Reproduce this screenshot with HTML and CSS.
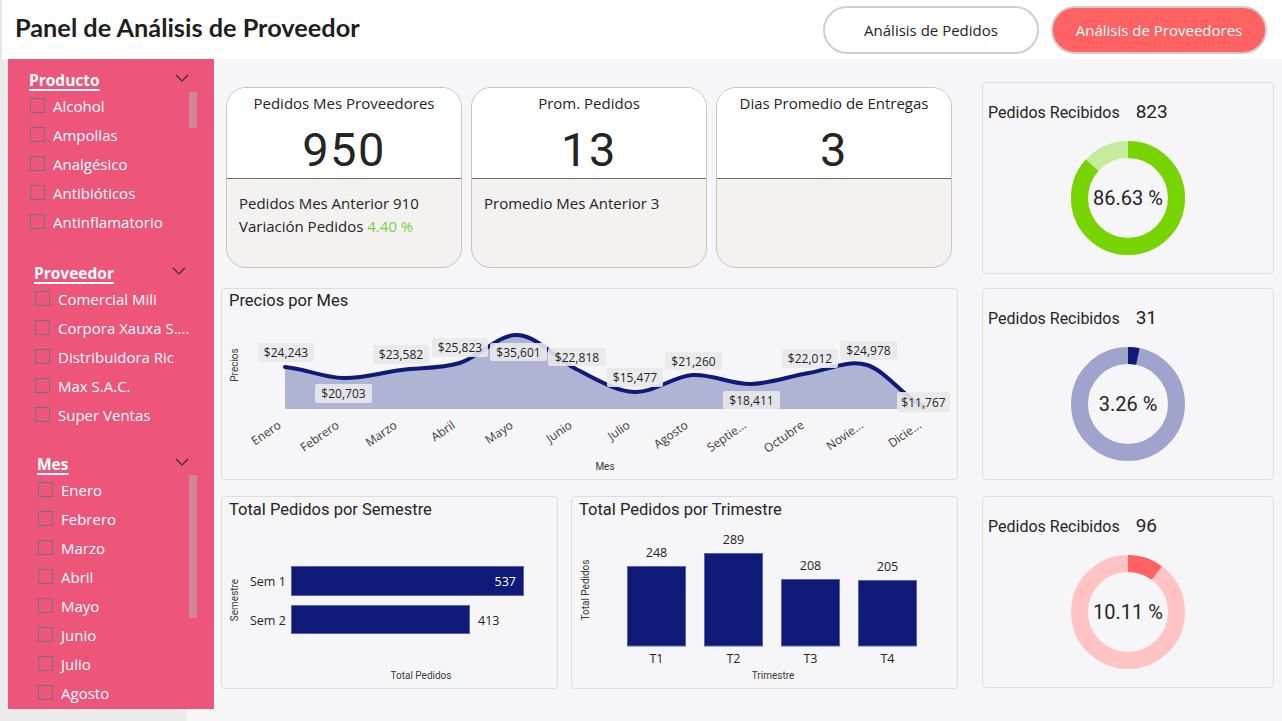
FILE: index.html
```html
<!DOCTYPE html>
<html lang="es">
<head>
<meta charset="utf-8">
<title>Panel de Análisis de Proveedor</title>
<link rel="stylesheet" href="styles.css">
</head>
<body>
<header class="topbar">
  <h1 class="page-title">Panel de Análisis de Proveedor</h1>
  <nav class="nav">
    <button class="nav-btn">Análisis de Pedidos</button>
    <button class="nav-btn active">Análisis de Proveedores</button>
  </nav>
</header>
<main class="main">
  <div class="side-wrap">
    <aside class="sidebar">
      <section class="slicer s-prod">
        <div class="slicer-head"><span class="slicer-title">Producto</span><svg class="chev" width="14" height="8" viewBox="0 0 14 8"><polyline points="1,1 7,7 13,1"/></svg></div>
        <ul class="slicer-list">
          <li><span class="cb"></span>Alcohol</li>
          <li><span class="cb"></span>Ampollas</li>
          <li><span class="cb"></span>Analgésico</li>
          <li><span class="cb"></span>Antibióticos</li>
          <li><span class="cb"></span>Antinflamatorio</li>
        </ul>
        <div class="scroll scroll-prod"></div>
      </section>
      <section class="slicer s-prov">
        <div class="slicer-head"><span class="slicer-title">Proveedor</span><svg class="chev" width="14" height="8" viewBox="0 0 14 8"><polyline points="1,1 7,7 13,1"/></svg></div>
        <ul class="slicer-list">
          <li><span class="cb"></span>Comercial Mili</li>
          <li><span class="cb"></span>Corpora Xauxa S....</li>
          <li><span class="cb"></span>Distribuidora Ric</li>
          <li><span class="cb"></span>Max S.A.C.</li>
          <li><span class="cb"></span>Super Ventas</li>
        </ul>
      </section>
      <section class="slicer s-mes">
        <div class="slicer-head"><span class="slicer-title">Mes</span><svg class="chev" width="14" height="8" viewBox="0 0 14 8"><polyline points="1,1 7,7 13,1"/></svg></div>
        <ul class="slicer-list">
          <li><span class="cb"></span>Enero</li>
          <li><span class="cb"></span>Febrero</li>
          <li><span class="cb"></span>Marzo</li>
          <li><span class="cb"></span>Abril</li>
          <li><span class="cb"></span>Mayo</li>
          <li><span class="cb"></span>Junio</li>
          <li><span class="cb"></span>Julio</li>
          <li><span class="cb"></span>Agosto</li>
        </ul>
        <div class="scroll scroll-mes"></div>
      </section>
    </aside>
  </div>

  <div class="content">
    <div class="left">
      <div class="kpi-row">
        <div class="kpi">
          <div class="kpi-top">
            <div class="kpi-title">Pedidos Mes Proveedores</div>
            <div class="kpi-num">950</div>
          </div>
          <div class="kpi-bottom">
            <div>Pedidos Mes Anterior 910</div>
            <div>Variación Pedidos <span class="pos">4.40 %</span></div>
          </div>
        </div>
        <div class="kpi">
          <div class="kpi-top">
            <div class="kpi-title">Prom. Pedidos</div>
            <div class="kpi-num">13</div>
          </div>
          <div class="kpi-bottom">
            <div>Promedio Mes Anterior 3</div>
          </div>
        </div>
        <div class="kpi">
          <div class="kpi-top">
            <div class="kpi-title">Dias Promedio de Entregas</div>
            <div class="kpi-num">3</div>
          </div>
          <div class="kpi-bottom"></div>
        </div>
      </div>

      <div class="card line-card">
        <div class="card-title">Precios por Mes</div>
        <svg class="chart" width="735" height="167" viewBox="222 312 735 167">
          <text class="axis-title" transform="translate(238,365) rotate(-90)" text-anchor="middle">Precios</text>
          <path class="area" d="M285,409 L285,367 C304.4,368.8 323.8,377.5 343.2,378 C362.6,378.5 382,372.5 401.4,370 C420.8,367.5 440.2,368.8 459.6,363 C479,357.2 498.4,334 517.8,335 C537.2,336 556.6,359.5 576,369 C595.4,378.5 614.8,391 634.2,392 C653.6,393 673,376.3 692.4,375 C711.8,373.7 731.2,384.3 750.6,384 C770,383.7 789.4,376.2 808.8,373 C828.2,369.8 847.6,359.3 867,365 C886.4,370.7 905.8,400 925.2,407 L925.2,409 Z"/>
          <path class="line" d="M285,367 C304.4,368.8 323.8,377.5 343.2,378 C362.6,378.5 382,372.5 401.4,370 C420.8,367.5 440.2,368.8 459.6,363 C479,357.2 498.4,334 517.8,335 C537.2,336 556.6,359.5 576,369 C595.4,378.5 614.8,391 634.2,392 C653.6,393 673,376.3 692.4,375 C711.8,373.7 731.2,384.3 750.6,384 C770,383.7 789.4,376.2 808.8,373 C828.2,369.8 847.6,359.3 867,365 C886.4,370.7 905.8,400 925.2,407"/>
          <g class="dlabels">
            <rect x="258" y="343" width="56" height="19" rx="2"/><text x="286" y="357">$24,243</text>
            <rect x="315" y="384" width="57" height="19" rx="2"/><text x="343.5" y="398">$20,703</text>
            <rect x="373" y="345" width="56" height="19" rx="2"/><text x="401" y="359">$23,582</text>
            <rect x="432" y="338" width="56" height="19" rx="2"/><text x="460" y="352">$25,823</text>
            <rect x="490" y="343" width="57" height="18" rx="2"/><text x="518.5" y="356.5">$35,601</text>
            <rect x="548" y="348" width="58" height="18" rx="2"/><text x="577" y="361.5">$22,818</text>
            <rect x="607" y="368" width="56" height="19" rx="2"/><text x="635" y="382">$15,477</text>
            <rect x="665" y="352" width="57" height="18" rx="2"/><text x="693.5" y="365.5">$21,260</text>
            <rect x="723" y="391" width="57" height="18" rx="2"/><text x="751.5" y="404.5">$18,411</text>
            <rect x="782" y="349" width="56" height="19" rx="2"/><text x="810" y="363">$22,012</text>
            <rect x="840" y="341" width="57" height="19" rx="2"/><text x="868.5" y="355">$24,978</text>
            <rect x="897" y="392" width="53" height="20" rx="2"/><text x="923.5" y="406.5">$11,767</text>
          </g>
          <g class="xlabels" text-anchor="end">
            <text transform="translate(282,427) rotate(-35)">Enero</text>
            <text transform="translate(340,427) rotate(-35)">Febrero</text>
            <text transform="translate(398,427) rotate(-35)">Marzo</text>
            <text transform="translate(456,427) rotate(-35)">Abril</text>
            <text transform="translate(514,427) rotate(-35)">Mayo</text>
            <text transform="translate(573,427) rotate(-35)">Junio</text>
            <text transform="translate(631,427) rotate(-35)">Julio</text>
            <text transform="translate(689,427) rotate(-35)">Agosto</text>
            <text transform="translate(747,427) rotate(-35)">Septie...</text>
            <text transform="translate(805,427) rotate(-35)">Octubre</text>
            <text transform="translate(864,427) rotate(-35)">Novie...</text>
            <text transform="translate(922,427) rotate(-35)">Dicie...</text>
          </g>
          <text class="axis-title" x="605" y="469.5" text-anchor="middle">Mes</text>
        </svg>
      </div>

      <div class="bottom-row">
        <div class="card sem-card">
          <div class="card-title">Total Pedidos por Semestre</div>
          <svg class="chart" width="335" height="167" viewBox="222 521 335 167">
            <text class="axis-title" transform="translate(238,600) rotate(-90)" text-anchor="middle">Semestre</text>
            <text class="cat" x="250" y="586">Sem 1</text>
            <text class="cat" x="250" y="625">Sem 2</text>
            <rect class="bar" x="291.5" y="566.5" width="232" height="29"/>
            <rect class="bar" x="291.5" y="605.5" width="178" height="28"/>
            <text class="val light" x="516" y="586" text-anchor="end">537</text>
            <text class="val" x="478" y="625">413</text>
            <text class="axis-title" x="421" y="678.5" text-anchor="middle">Total Pedidos</text>
          </svg>
        </div>
        <div class="card tri-card">
          <div class="card-title">Total Pedidos por Trimestre</div>
          <svg class="chart" width="385" height="167" viewBox="572 521 385 167">
            <text class="axis-title" transform="translate(589,590) rotate(-90)" text-anchor="middle">Total Pedidos</text>
            <rect class="bar" x="627.5" y="566.5" width="58" height="79.5"/>
            <rect class="bar" x="704.5" y="553.5" width="58" height="92.5"/>
            <rect class="bar" x="781.5" y="579.5" width="58" height="66.5"/>
            <rect class="bar" x="858.5" y="580.5" width="58" height="65.5"/>
            <g text-anchor="middle">
              <text class="val" x="656.5" y="557">248</text>
              <text class="val" x="733.5" y="544">289</text>
              <text class="val" x="810.5" y="570">208</text>
              <text class="val" x="887.5" y="571">205</text>
              <text class="cat" x="656.5" y="662.5">T1</text>
              <text class="cat" x="733.5" y="662.5">T2</text>
              <text class="cat" x="810.5" y="662.5">T3</text>
              <text class="cat" x="887.5" y="662.5">T4</text>
              <text class="axis-title" x="773" y="678.5">Trimestre</text>
            </g>
          </svg>
        </div>
      </div>
    </div>

    <div class="right">
      <div class="gauge">
        <div class="g-head"><span>Pedidos Recibidos</span><span class="g-val">823</span></div>
        <svg class="donut" width="114" height="114" viewBox="0 0 114 114">
          <circle class="ring" cx="57" cy="57" r="48.5" stroke="#c6eb9c"/>
          <circle class="ring" cx="57" cy="57" r="48.5" stroke="#77d400" stroke-dasharray="263.99 304.73" transform="rotate(-90 57 57)"/>
          <text class="pct" x="57" y="57">86.63 %</text>
        </svg>
      </div>
      <div class="gauge">
        <div class="g-head"><span>Pedidos Recibidos</span><span class="g-val">31</span></div>
        <svg class="donut" width="114" height="114" viewBox="0 0 114 114">
          <circle class="ring" cx="57" cy="57" r="48.5" stroke="#a0a4cc"/>
          <circle class="ring" cx="57" cy="57" r="48.5" stroke="#0f1a78" stroke-dasharray="9.93 304.73" transform="rotate(-90 57 57)"/>
          <text class="pct" x="57" y="57">3.26 %</text>
        </svg>
      </div>
      <div class="gauge">
        <div class="g-head"><span>Pedidos Recibidos</span><span class="g-val">96</span></div>
        <svg class="donut" width="114" height="114" viewBox="0 0 114 114">
          <circle class="ring" cx="57" cy="57" r="48.5" stroke="#ffc3c3"/>
          <circle class="ring" cx="57" cy="57" r="48.5" stroke="#fe6262" stroke-dasharray="30.81 304.73" transform="rotate(-90 57 57)"/>
          <text class="pct" x="57" y="57">10.11 %</text>
        </svg>
      </div>
    </div>
  </div>
</main>
</body>
</html>
```
FILE: styles.css
```css
* { box-sizing: border-box; }
html, body { margin: 0; padding: 0; }
body {
  width: 1282px;
  height: 721px;
  overflow: hidden;
  background: #f6f6f8;
  color: #252423;
  font-family: "Open Sans", "Segoe UI", sans-serif;
}

/* header */
.topbar {
  height: 59px;
  background: #fff;
  display: flex;
  align-items: center;
  padding: 0 15px 0 15px;
  box-shadow: inset 2px 0 0 #e6e6e6;
}
.page-title {
  margin: 0;
  font-family: Lato, "Open Sans", sans-serif;
  font-weight: 700;
  font-size: 25.3px;
  line-height: 30px;
  margin-top: -6px;
  color: #1f1f1f;
  flex: 1;
}
.nav { display: flex; gap: 12px; }
.nav-btn {
  width: 216px;
  height: 48px;
  border-radius: 24px;
  border: 2px solid #cfcfcf;
  background: #fff;
  color: #252423;
  font-family: "Open Sans", sans-serif;
  font-size: 15px;
  padding: 0;
}
.nav-btn.active { background: #fe6262; color: #fff; border-color: #d4c9c9; }

/* layout */
.main { display: flex; height: 662px; }
.side-wrap {
  width: 214px;
  padding-left: 8px;
  background: linear-gradient(to right, #ebebeb 186px, #f6f6f8 186px);
}
.sidebar {
  width: 206px;
  height: 650px;
  background: #ee557a;
  overflow: hidden;
  padding-top: 10px;
  color: #fff;
}
.slicer { position: relative; }
.s-prod { padding-left: 21px; }
.s-prov { padding-left: 26px; margin-top: 26px; }
.s-mes { padding-left: 29px; margin-top: 24px; }
.slicer-head {
  height: 22px;
  display: flex;
  align-items: center;
  justify-content: space-between;
  padding-right: 25px;
}
.s-prov .slicer-head { padding-right: 28px; }
.slicer-title {
  font-weight: 700;
  font-size: 15.5px;
  text-decoration: underline;
  text-underline-offset: 3px;
  text-decoration-thickness: 2px;
}
.chev { margin-top: -4px; }
.chev polyline { fill: none; stroke: #333; stroke-width: 1.2; }
.slicer-list { list-style: none; margin: 0; padding: 0; }
.slicer-list li {
  height: 29px;
  display: flex;
  align-items: center;
  font-size: 15px;
  white-space: nowrap;
}
.cb {
  width: 15px;
  height: 15px;
  border: 1px solid #737373;
  margin-left: 1px;
  margin-right: 8px;
  flex: none;
}
.scroll {
  position: absolute;
  right: 17px;
  width: 8px;
  background: #d28499;
}
.scroll-prod { top: 23px; height: 36px; }
.scroll-mes { top: 22px; height: 143px; }

.content { display: flex; gap: 24px; padding-left: 7px; }
.left { width: 737px; padding-top: 28px; }
.kpi-row { display: flex; gap: 9px; padding-left: 5px; }
.kpi {
  width: 236px;
  height: 181px;
  border: 1px solid #c8c6c4;
  border-radius: 20px;
  overflow: hidden;
  background: #f3f2f1;
}
.kpi-top {
  height: 91px;
  background: #fff;
  border-bottom: 1px solid #6b6a69;
  text-align: center;
}
.kpi-title { padding-top: 4px; line-height: 22px; font-size: 15px; }
.kpi-num {
  font-family: Roboto, sans-serif;
  font-size: 47px;
  line-height: 48px;
  margin-top: 12px;
  letter-spacing: 1.5px;
  color: #252423;
}
.kpi-bottom { padding: 13px 12px; line-height: 23px; font-size: 15px; }
.pos { color: #7ccf3a; }

.card {
  border: 1px solid #dedddc;
  border-radius: 4px;
  background: #f6f6f8;
}
.card-title {
  font-family: Roboto, sans-serif;
  font-weight: 400;
  font-size: 16.5px;
  line-height: 22px;
  padding-left: 7px;
  color: #252423;
}
.line-card { margin-top: 20px; height: 192px; }
.line-card .card-title { padding-top: 1px; }
.chart { display: block; }
.bottom-row { display: flex; gap: 13px; margin-top: 16px; }
.sem-card { width: 337px; height: 193px; }
.tri-card { width: 387px; height: 193px; }
.sem-card .card-title, .tri-card .card-title { padding-top: 2px; }

.chart text { font-family: "Open Sans", sans-serif; fill: #252423; }
.chart .axis-title { font-family: Roboto, sans-serif; font-size: 10px; font-weight: 400; fill: #3b3a39; }
.area { fill: #b0b4d4; }
.line { fill: none; stroke: #0f1a78; stroke-width: 4; stroke-linecap: round; }
.dlabels rect { fill: #e9e9eb; opacity: 0.9; }
.dlabels text { font-size: 12px; text-anchor: middle; }
.xlabels text { font-size: 12px; fill: #3b3a39; }
.bar { fill: #0f1a78; stroke: #5d64a8; stroke-width: 1; }
.chart .cat { font-size: 12.5px; }
.chart .val { font-size: 12.5px; }
.chart .light { fill: #fff; }

.right { width: 292px; padding-top: 23px; display: flex; flex-direction: column; gap: 14px; }
.right .gauge:nth-child(3) { margin-top: 2px; }
.gauge {
  height: 192px;
  border: 1px solid #dedddc;
  border-radius: 4px;
  background: #f6f6f8;
  padding: 18px 5px 0;
}
.g-head {
  display: flex;
  gap: 16px;
  align-items: baseline;
  line-height: 22px;
  font-family: Roboto, sans-serif;
  font-size: 16px;
  color: #252423;
}
.g-val { font-size: 19px; }
.donut { display: block; margin: 17px auto 0; }
.ring { fill: none; stroke-width: 17; }
.pct {
  font-family: Roboto, sans-serif;
  font-size: 20px;
  fill: #252423;
  text-anchor: middle;
  dominant-baseline: central;
}
```
